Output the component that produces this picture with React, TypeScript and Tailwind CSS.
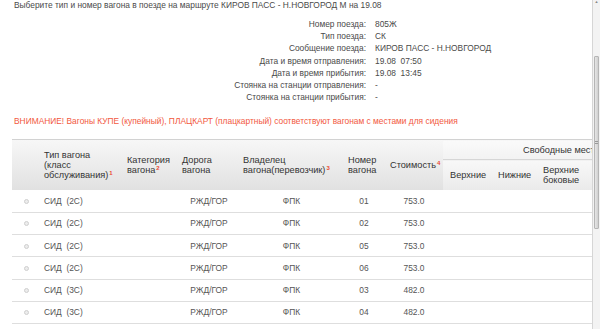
import React from "react";

const info = [
  ["Номер поезда:", "805Ж"],
  ["Тип поезда:", "СК"],
  ["Сообщение поезда:", "КИРОВ ПАСС - Н.НОВГОРОД"],
  ["Дата и время отправления:", "19.08  07:50"],
  ["Дата и время прибытия:", "19.08  13:45"],
  ["Стоянка на станции отправления:", "-"],
  ["Стоянка на станции прибытия:", "-"],
];

const cars = [
  { type: "СИД  (2С)", num: "01", price: "753.0" },
  { type: "СИД  (2С)", num: "02", price: "753.0" },
  { type: "СИД  (2С)", num: "05", price: "753.0" },
  { type: "СИД  (2С)", num: "06", price: "753.0" },
  { type: "СИД  (3С)", num: "03", price: "482.0" },
  { type: "СИД  (3С)", num: "04", price: "482.0" },
];

function Sup({ n }: { n: string }) {
  return (
    <span className="relative -top-[3px] ml-[1px] text-[6px] leading-none font-bold text-[#ea4a32]">{n}</span>
  );
}

export default function App() {
  return (
    <div className="flex h-[329px] w-[600px] overflow-hidden bg-white font-['Liberation_Sans',Arial,sans-serif] text-[8.4px] leading-[10px] text-[#4a4a4a]">
      <div className="w-[592px] shrink-0 overflow-hidden">
        <p className="whitespace-nowrap pl-[14px]">
          Выберите тип и номер вагона в поезде на маршруте КИРОВ ПАСС - Н.НОВГОРОД М на 19.08
        </p>

        {/* train info */}
        <div className="mt-[8px] flex flex-col">
          {info.map(([k, v]) => (
            <div key={k} className="flex h-[12.2px] items-center whitespace-pre">
              <span className="w-[366px] text-right">{k}</span>
              <span className="pl-[9px]">{v}</span>
            </div>
          ))}
        </div>

        <p className="mt-[13px] whitespace-nowrap pl-[14px] text-[#f2583e]">
          ВНИМАНИЕ! Вагоны КУПЕ (купейный), ПЛАЦКАРТ (плацкартный) соответствуют вагонам с местами для сидения
        </p>

        {/* cars table */}
        <table className="mt-[13px] ml-[12px] w-[640px] table-fixed border-collapse text-[#333]">
          <colgroup>
            <col className="w-[28px]" />
            <col className="w-[82px]" />
            <col className="w-[56px]" />
            <col className="w-[62px]" />
            <col className="w-[103px]" />
            <col className="w-[42px]" />
            <col className="w-[58px]" />
            <col className="w-[47px]" />
            <col className="w-[48px]" />
            <col className="w-[114px]" />
          </colgroup>
          <thead className="bg-gradient-to-b from-[#f7f7f7] to-[#e1e1e1] text-[9.2px] leading-[10px]">
            <tr className="h-[20px] border-t border-[#d2d2d2]">
              <th rowSpan={2}></th>
              <th rowSpan={2} className="pl-[4px] text-left font-normal">
                Тип вагона
                <br />
                (класс
                <br />
                обслуживания)
                <Sup n="1" />
              </th>
              <th rowSpan={2} className="pl-[5px] text-left font-normal">
                Категория
                <br />
                вагона
                <Sup n="2" />
              </th>
              <th rowSpan={2} className="pl-[4px] text-left font-normal">
                Дорога
                <br />
                вагона
              </th>
              <th rowSpan={2} className="pl-[3px] text-left font-normal">
                Владелец
                <br />
                вагона(перевозчик)
                <Sup n="3" />
              </th>
              <th rowSpan={2} className="pl-[5px] text-left font-normal">
                Номер
                <br />
                вагона
              </th>
              <th rowSpan={2} className="pl-[5px] text-left font-normal">
                Стоимость
                <Sup n="4" />
              </th>
              <th
                colSpan={3}
                className="whitespace-nowrap border-b border-[#d6d6d6] bg-gradient-to-b from-[#fafafa] to-[#f2f2f2] pl-[80px] text-left font-normal"
              >
                Свободные места
              </th>
            </tr>
            <tr className="h-[30px]">
              <th className="bg-gradient-to-b from-[#f8f8f8] to-[#eaeaea] pl-[7px] text-left font-normal">Верхние</th>
              <th className="bg-gradient-to-b from-[#f8f8f8] to-[#eaeaea] pl-[8px] text-left font-normal">Нижние</th>
              <th className="bg-gradient-to-b from-[#f8f8f8] to-[#eaeaea] pl-[5px] text-left font-normal">
                Верхние
                <br />
                боковые
              </th>
            </tr>
          </thead>
          <tbody className="text-[8.4px] text-[#555]">
            {cars.map((c) => (
              <tr key={c.num} className="h-[22.3px] border-b border-[#dedede]">
                <td className="text-center">
                  <span className="inline-block h-[5px] w-[5px] rounded-full border border-[#cfcfcf] bg-[#ececec]" />
                </td>
                <td className="whitespace-pre pl-[4px] text-[#555]">{c.type}</td>
                <td></td>
                <td className="text-center text-[#555]">РЖД/ГОР</td>
                <td className="text-center text-[#555]">ФПК</td>
                <td className="text-center text-[#555]">{c.num}</td>
                <td className="text-center text-[#555]">{c.price}</td>
                <td></td>
                <td></td>
                <td></td>
              </tr>
            ))}
          </tbody>
        </table>
      </div>

      {/* page scrollbar */}
      <div className="flex w-[8px] flex-col border-l border-[#d6d6d6] bg-[#f3f3f3]">
        <div className="flex h-[6px] items-start justify-center text-[4px] leading-none text-[#888]">▲</div>
        <div className="mx-[1px] mt-[50px] flex h-[173px] items-center justify-center rounded-[1px] border border-[#b5b5b5] bg-gradient-to-r from-[#e6e6e6] to-[#d0d0d0]">
          <div className="flex flex-col gap-[1px]">
            <div className="h-px w-[3px] bg-[#999]" />
            <div className="h-px w-[3px] bg-[#999]" />
          </div>
        </div>
      </div>
    </div>
  );
}
